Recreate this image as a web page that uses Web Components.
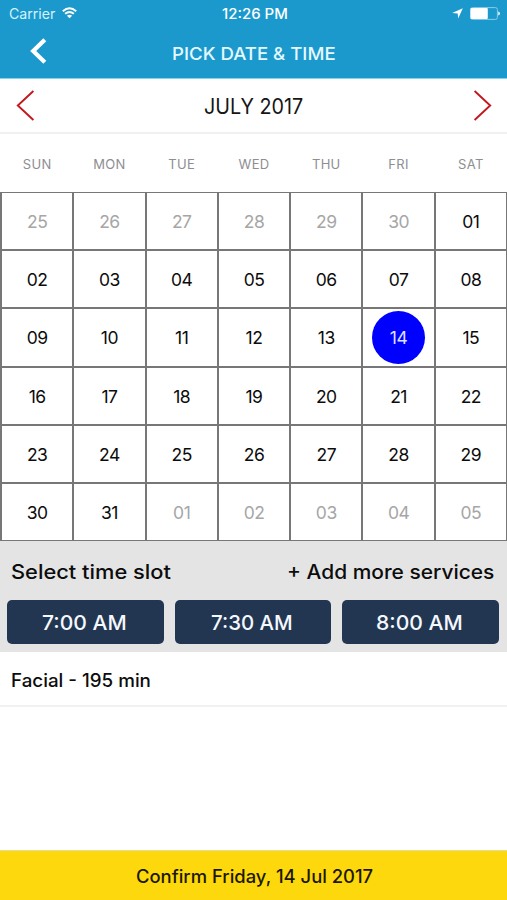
<!DOCTYPE html>
<html lang="en">
<head>
<meta charset="utf-8">
<title>Pick date &amp; time</title>
<style>
html,body{margin:0;height:100%}
body{font-family:Inter,"Liberation Sans",sans-serif;background:#fff;overflow:hidden}
</style>
</head>
<body>
<booking-screen></booking-screen>
<script>
// A line of text stretched so that its ink spans the "width" attribute.
customElements.define('fit-text', class extends HTMLElement {
  connectedCallback() {
    const size = +this.getAttribute('size'), weight = this.getAttribute('weight') || 500;
    const width = +this.getAttribute('width');
    const ctx = document.createElement('canvas').getContext('2d');
    ctx.font = `${weight} ${size}px Inter`;
    const m = ctx.measureText(this.textContent);
    const k = width / (m.actualBoundingBoxLeft + m.actualBoundingBoxRight);
    this.attachShadow({mode: 'open'}).innerHTML = `<style>
      :host{display:block;flex:none;width:${width}px;height:1.2em;line-height:1.2;font-size:${size}px;font-weight:${weight};white-space:nowrap}
      span{display:inline-block;transform-origin:0 50%;margin-left:${m.actualBoundingBoxLeft * k}px;transform:scaleX(${k})}
    </style><span><slot></slot></span>`;
  }
});

customElements.define('status-bar', class extends HTMLElement {
  connectedCallback() {
    this.attachShadow({mode: 'open'}).innerHTML = `<style>
      :host{display:grid;grid-template-columns:1fr auto 1fr;align-items:center;height:27px;padding:0 7px 0 9px;color:#fff}
      div{display:flex;align-items:center}
      .left{gap:7px;color:#d5f3fc}.right{justify-content:flex-end;gap:7px}
      .left fit-text,.time{padding-top:1px}
      svg{display:block}
    </style>
    <div class="left"><fit-text size="14" weight="400" width="46">Carrier</fit-text>
      <svg width="15" height="12" viewBox="0 0 15 12" fill="none" stroke="#fff" stroke-width="1.9"><path d="M.8 4.2Q7.5-1.8 14.2 4.2M3.1 6.8Q7.5 3 11.9 6.8"/><path d="M7.5 11.3L4.9 8.7Q7.5 6.8 10.1 8.7Z" fill="#fff" stroke="none"/></svg></div>
    <fit-text class="time" size="14" weight="500" width="65">12:26 PM</fit-text>
    <div class="right">
      <svg width="11" height="11" viewBox="0 0 11 11"><path d="M10.8.3L6.2 10.6 5.7 5.5.2 5Z" fill="#fff"/></svg>
      <svg width="30" height="13" viewBox="0 0 30 13"><rect x=".6" y=".6" width="26.8" height="11.8" rx="2" fill="none" stroke="#8acde7" stroke-width="1"/><rect x=".5" y="1" width="17.3" height="11" rx="1" fill="#fff"/><path d="M28.2 4.4Q30 5 30 6.5T28.2 8.6Z" fill="#e8f8ff"/></svg>
    </div>`;
  }
});

customElements.define('nav-bar', class extends HTMLElement {
  connectedCallback() {
    this.attachShadow({mode: 'open'}).innerHTML = `<style>
      :host{display:grid;grid-template-columns:1fr auto 1fr;align-items:center;height:51px;padding:0 30px;color:#e4f8ff;border-bottom:1px solid #83d3ef}
      svg{display:block;margin-top:-3px}
      fit-text{padding:2px 0 0 1px}
    </style>
    <svg width="17" height="26" viewBox="0 0 17 26"><path d="M14.8 1.8L3.2 13 14.8 24.2" fill="none" stroke="#fff" stroke-width="4.2"/></svg>
    <fit-text size="17.5" width="162">${this.getAttribute('heading')}</fit-text><i></i>`;
  }
});

customElements.define('month-bar', class extends HTMLElement {
  connectedCallback() {
    this.attachShadow({mode: 'open'}).innerHTML = `<style>
      :host{display:flex;justify-content:space-between;align-items:center;height:53px;padding:0 15px 0 16px;border-bottom:2px solid #f0f0f0;color:#161616}
      svg{display:block;fill:none;stroke:#c4161f;stroke-width:1.9}
      fit-text{padding-top:2px}
    </style>
    <svg width="19" height="31" viewBox="0 0 19 31"><path d="M17.4 1L1.8 15.5 17.4 30"/></svg>
    <fit-text size="21" weight="400" width="97.5">${this.getAttribute('month')}</fit-text>
    <svg width="19" height="31" viewBox="0 0 19 31"><path d="M1.6 1L17.2 15.5 1.6 30"/></svg>`;
  }
});

customElements.define('day-cell', class extends HTMLElement {
  connectedCallback() {
    this.attachShadow({mode: 'open'}).innerHTML = `<style>
      :host{display:flex;align-items:center;justify-content:center;background:#fff;color:#0c0c0c;font-size:17.5px;font-weight:400;letter-spacing:-.5px}
      :host([outside]){color:#a6a6a6}
      span{display:flex;align-items:center;justify-content:center;width:53px;height:53px;border-radius:50%;box-sizing:border-box;padding-top:1px}
      :host([selected]) span{background:#00f;color:#dfe2ff}
    </style><span><slot></slot></span>`;
  }
});

customElements.define('month-grid', class extends HTMLElement {
  connectedCallback() {
    const two = n => String(n).padStart(2, '0');
    const cells = [];
    for (let d = 25; d <= 30; d++) cells.push(`<day-cell outside>${d}</day-cell>`);
    for (let d = 1; d <= 31; d++) cells.push(`<day-cell${d === 14 ? ' selected' : ''}>${two(d)}</day-cell>`);
    for (let d = 1; d <= 5; d++) cells.push(`<day-cell outside>${two(d)}</day-cell>`);
    const names = ['SUN','MON','TUE','WED','THU','FRI','SAT'].map(n => `<b>${n}</b>`).join('');
    this.attachShadow({mode: 'open'}).innerHTML = `<style>
      :host{display:block}
      .names,.days{display:grid;grid-template-columns:repeat(7,1fr);gap:2px}
      .names{height:58px;padding:0 1px 0 2px;align-items:center;text-align:center}
      b{font-size:13px;font-weight:400;color:#8e8e92;letter-spacing:.3px;padding-top:1px}
      .days{box-sizing:border-box;height:349px;padding:1px 1px 1px 2px;background:#777;grid-template-rows:repeat(6,1fr)}
    </style><div class="names">${names}</div><div class="days">${cells.join('')}</div>`;
  }
});

customElements.define('slot-button', class extends HTMLElement {
  connectedCallback() {
    this.attachShadow({mode: 'open'}).innerHTML = `<style>
      :host{display:flex;flex:1;align-items:center;justify-content:center;height:44px;border-radius:5px;background:#233651;color:#f4f8ff;box-sizing:border-box;padding:3px 2px 0 0}
    </style><fit-text size="20.5" width="${this.getAttribute('ink')}">${this.getAttribute('time')}</fit-text>`;
  }
});

customElements.define('slot-panel', class extends HTMLElement {
  connectedCallback() {
    this.attachShadow({mode: 'open'}).innerHTML = `<style>
      :host{display:block;height:111px;background:#e4e4e4;color:#0c0c0c}
      .head{display:flex;justify-content:space-between;align-items:center;height:59px;padding:3px 13px 0 12px;box-sizing:border-box}
      .slots{display:flex;gap:11px;padding:0 8.5px 0 7px}
    </style>
    <div class="head"><fit-text size="20" width="159">Select time slot</fit-text>
    <fit-text size="20" width="205.5">+ Add more services</fit-text></div>
    <div class="slots"><slot></slot></div>`;
  }
});

customElements.define('service-row', class extends HTMLElement {
  connectedCallback() {
    this.attachShadow({mode: 'open'}).innerHTML = `<style>
      :host{display:flex;align-items:center;height:51px;padding:2px 12px 0;border-bottom:2px solid #f1f1f1;color:#0c0c0c}
      fit-text{padding-top:2px}
    </style><fit-text size="18" width="138">${this.getAttribute('label')}</fit-text>`;
  }
});

customElements.define('confirm-bar', class extends HTMLElement {
  connectedCallback() {
    this.attachShadow({mode: 'open'}).innerHTML = `<style>
      :host{display:flex;align-items:center;justify-content:center;margin-top:auto;padding:3px 0 0 1px;box-sizing:border-box;height:50px;border-top:1px solid #e4dc98;background:#fdd80c;color:#1c1802}
    </style><fit-text size="18" width="237">${this.getAttribute('label')}</fit-text>`;
  }
});

customElements.define('booking-screen', class extends HTMLElement {
  connectedCallback() {
    this.attachShadow({mode: 'open'}).innerHTML = `<style>
      :host{display:flex;flex-direction:column;width:507px;height:900px;background:#fff}
      header{background:#1c99cc}
    </style>
    <header><status-bar></status-bar><nav-bar heading="PICK DATE &amp;amp; TIME"></nav-bar></header>
    <month-bar month="JULY 2017"></month-bar>
    <month-grid></month-grid>
    <slot-panel>
      <slot-button time="7:00 AM" ink="84"></slot-button>
      <slot-button time="7:30 AM" ink="81"></slot-button>
      <slot-button time="8:00 AM" ink="85"></slot-button>
    </slot-panel>
    <service-row label="Facial - 195 min"></service-row>
    <confirm-bar label="Confirm Friday, 14 Jul 2017"></confirm-bar>`;
  }
});
</script>
</body>
</html>
